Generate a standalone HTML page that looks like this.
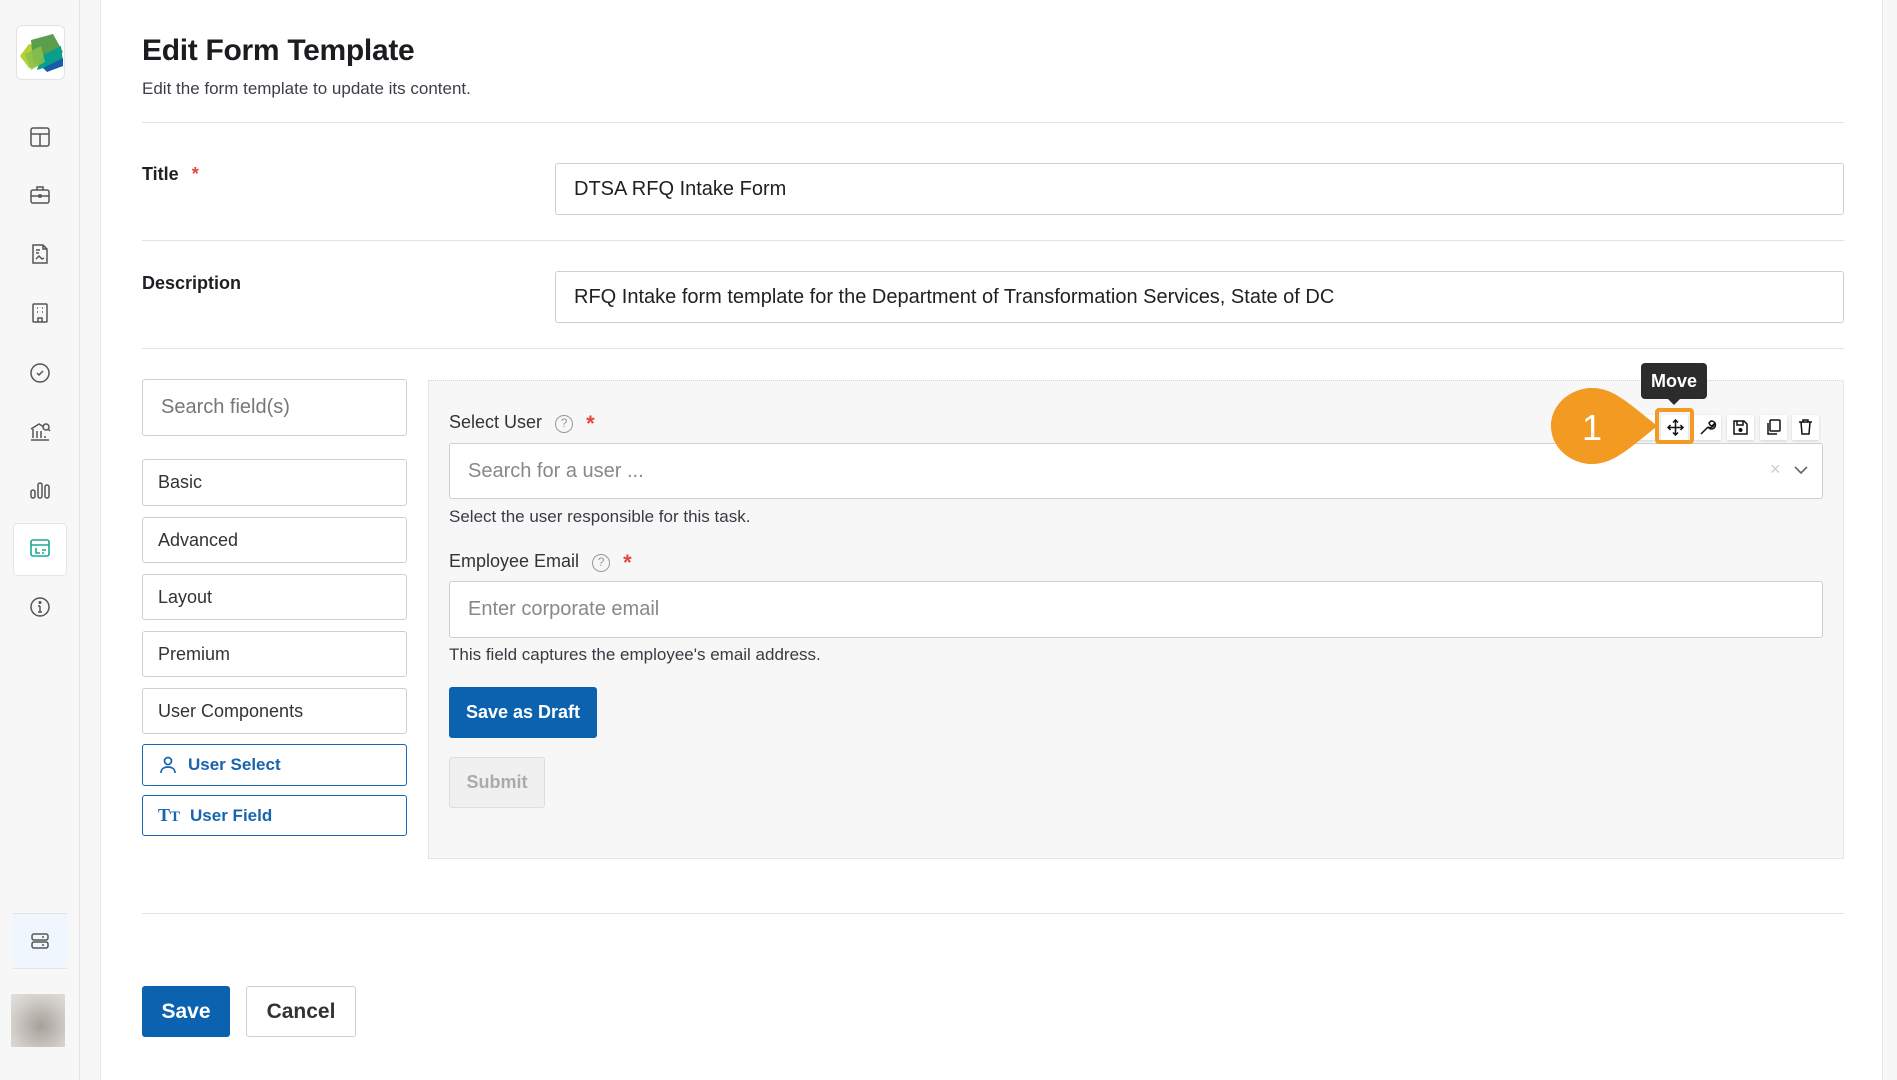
<!DOCTYPE html>
<html><head><meta charset="utf-8"><style>
*{box-sizing:border-box;margin:0;padding:0}
body{width:1897px;height:1080px;position:relative;overflow:hidden;background:#fff;font-family:"Liberation Sans",sans-serif;color:#1f1f24}
.a{position:absolute}
.sb{left:0;top:0;width:80px;height:1080px;background:#f7f7f7;border-right:1px solid #e4e4e4}
.sb2{left:80px;top:0;width:21px;height:1080px;background:#f7f7f7;border-right:1px solid #e8e8e8}
.rs{left:1882px;top:0;width:15px;height:1080px;background:#f7f7f7;border-left:1px solid #e8e8e8}
.ic{left:28px;width:24px;height:24px}
.hr{left:142px;width:1702px;height:1px;background:#e2e2e2}
.lbl{font-size:18px;font-weight:bold;left:142px}
.inp{border:1px solid #cfcfcf;border-radius:3px;background:#fff;font-size:20px;padding-left:18px;display:flex;align-items:center}
.btn{left:142px;width:265px;border:1px solid #cfcfcf;border-radius:3px;background:#fff;font-size:18px;padding-left:15px;display:flex;align-items:center;color:#333}
.btnb{border-color:#1a67b0;color:#1765ae;font-weight:bold;font-size:17px}
.tb{top:415px;width:27px;height:25px;background:#fff;box-shadow:0 1px 3px rgba(0,0,0,.15)}
.q{display:inline-block;width:18px;height:18px;border:1.5px solid #999;border-radius:50%;font-size:12px;text-align:center;line-height:15px;color:#999;margin-left:8px;vertical-align:1px}
.st{color:#e5453a;margin-left:8px;font-weight:bold;font-size:22px;vertical-align:-3px}
</style></head><body>
<div class="a sb"></div><div class="a sb2"></div><div class="a rs"></div>
<div class="a" style="left:16px;top:25px;width:49px;height:55px;border:1px solid #e3e3e3;border-radius:6px;background:#fff;overflow:hidden">
<svg width="49" height="55" viewBox="0 0 49 55"><path d="M3 30 L12 18 L26 22 L20 40 L12 42Z" fill="#b5cf3a"/><path d="M14 14 L36 8 L46 26 L30 44 L16 36Z" fill="#5a9e4e"/><path d="M24 30 L44 20 L46 36 L20 44Z" fill="#0a9f8c"/><path d="M26 42 L46 32 L46 40 L30 46Z" fill="#1a5ca8"/><path d="M8 28 L24 20 L28 36 L14 44Z" fill="#8cc24a" opacity=".85"/></svg></div>
<svg class="a ic" style="top:125px" viewBox="0 0 24 24" fill="none" stroke="#555" stroke-width="1.5"><rect x="3" y="3" width="18" height="18" rx="2"/><path d="M3 9h18M12 9v12"/></svg>
<svg class="a ic" style="top:183px" viewBox="0 0 24 24" fill="none" stroke="#555" stroke-width="1.5"><rect x="3" y="7" width="18" height="13" rx="2"/><path d="M9 7V4h6v3M3 13h18M11 12h2v2h-2z"/></svg>
<svg class="a ic" style="top:242px" viewBox="0 0 24 24" fill="none" stroke="#555" stroke-width="1.5"><path d="M5 3h10l4 4v14H5z M15 3v4h4M8 8h4M8 11h3M8 17l3-3 3 3 2-1"/></svg>
<svg class="a ic" style="top:301px" viewBox="0 0 24 24" fill="none" stroke="#555" stroke-width="1.5"><rect x="5" y="3" width="14" height="18" rx="1"/><path d="M9 7h1M14 7h1M9 11h1M14 11h1M10 21v-4h4v4"/></svg>
<svg class="a ic" style="top:361px" viewBox="0 0 24 24" fill="none" stroke="#555" stroke-width="1.5"><circle cx="12" cy="12" r="9"/><path d="M9 12l2 2 4-4"/></svg>
<svg class="a ic" style="top:419px" viewBox="0 0 24 24" fill="none" stroke="#555" stroke-width="1.5"><path d="M3 10l8-5 5 3M3 21h18M5 10v9M9 12v7M13 12v7M17 17v2"/><circle cx="18" cy="8" r="3"/><path d="M20 10l2 2"/></svg>
<svg class="a ic" style="top:478px" viewBox="0 0 24 24" fill="none" stroke="#555" stroke-width="1.5"><rect x="3" y="12" width="4" height="8" rx="2"/><rect x="10" y="5" width="4" height="15" rx="2"/><rect x="17" y="7" width="4" height="13" rx="2"/></svg>
<div class="a" style="left:13px;top:523px;width:54px;height:53px;background:#fff;border:1px solid #e5e5e5;border-radius:5px"></div>
<svg class="a ic" style="top:536px" viewBox="0 0 24 24" fill="none" stroke="#1aaa92" stroke-width="1.6"><rect x="3" y="4" width="18" height="16" rx="2"/><path d="M3 9h18M8 12v5h4M14 14h4M14 17h2"/></svg>
<svg class="a ic" style="top:595px" viewBox="0 0 24 24" fill="none" stroke="#555" stroke-width="1.5"><circle cx="12" cy="12" r="9"/><path d="M12 11v6M10 17h4M10 11h2"/><circle cx="12" cy="7.5" r=".8" fill="#555"/></svg>
<div class="a" style="left:13px;top:913px;width:54px;height:56px;background:#eff6fd;border-top:1px solid #e3e3e3;border-bottom:1px solid #e3e3e3"></div>
<svg class="a ic" style="top:929px" viewBox="0 0 24 24" fill="none" stroke="#555" stroke-width="1.5"><rect x="4" y="5" width="16" height="6" rx="2"/><rect x="4" y="13" width="16" height="6" rx="2"/><path d="M14 8h2M14 16h2"/></svg>
<div class="a" style="left:11px;top:994px;width:54px;height:53px;background:radial-gradient(circle at 55% 60%,#a8a09a,#d6d3cf 70%,#e3e1de)"></div>

<div class="a" style="left:142px;top:34px;font-size:30px;font-weight:bold;color:#1c1c20;letter-spacing:-0.3px">Edit Form Template</div>
<div class="a" style="left:142px;top:79px;font-size:17px;color:#3e3e48">Edit the form template to update its content.</div>
<div class="a hr" style="top:122px"></div>
<div class="a lbl" style="top:164px">Title <span style="color:#e5453a;margin-left:8px">*</span></div>
<div class="a inp" style="left:555px;top:163px;width:1289px;height:52px">DTSA RFQ Intake Form</div>
<div class="a hr" style="top:240px"></div>
<div class="a lbl" style="top:273px">Description</div>
<div class="a inp" style="left:555px;top:271px;width:1289px;height:52px">RFQ Intake form template for the Department of Transformation Services, State of DC</div>
<div class="a hr" style="top:348px"></div>

<div class="a inp" style="left:142px;top:379px;width:265px;height:57px;color:#777;font-size:20px">Search field(s)</div>
<div class="a btn" style="top:459px;height:47px">Basic</div>
<div class="a btn" style="top:517px;height:46px">Advanced</div>
<div class="a btn" style="top:574px;height:46px">Layout</div>
<div class="a btn" style="top:631px;height:46px">Premium</div>
<div class="a btn" style="top:688px;height:46px">User Components</div>
<div class="a btn btnb" style="top:744px;height:42px"><svg width="20" height="20" viewBox="0 0 20 20" fill="none" stroke="#1765ae" stroke-width="1.7" style="margin-right:10px"><circle cx="10" cy="6" r="3.5"/><path d="M3 18c0-4 3-6 7-6s7 2 7 6"/></svg>User Select</div>
<div class="a btn btnb" style="top:795px;height:41px"><span style="font-family:'Liberation Serif',serif;font-size:18px;margin-right:10px">T<small>T</small></span>User Field</div>

<div class="a" style="left:428px;top:380px;width:1416px;height:479px;background:#f7f7f7;border:1px dotted #d6d6d6"></div>
<div class="a" style="left:449px;top:411px;font-size:18px;color:#333">Select User <span class="q">?</span> <span class="st">*</span></div>
<div class="a inp" style="left:449px;top:443px;width:1374px;height:56px;color:#888">Search for a user ...</div>
<div class="a" style="left:1770px;top:459px;color:#ccc;font-size:18px">×</div>
<svg class="a" style="left:1793px;top:464px" width="16" height="12" viewBox="0 0 16 12" fill="none" stroke="#666" stroke-width="1.6"><path d="M2 3l6 6 6-6"/></svg>
<div class="a" style="left:449px;top:507px;font-size:17px;color:#3a3a44">Select the user responsible for this task.</div>
<div class="a" style="left:449px;top:550px;font-size:18px;color:#333">Employee Email <span class="q">?</span> <span class="st">*</span></div>
<div class="a inp" style="left:449px;top:581px;width:1374px;height:57px;color:#888">Enter corporate email</div>
<div class="a" style="left:449px;top:645px;font-size:17px;color:#3a3a44">This field captures the employee's email address.</div>
<div class="a" style="left:449px;top:687px;width:148px;height:51px;background:#0b63b0;border-radius:3px;color:#fff;font-weight:bold;font-size:18px;display:flex;align-items:center;justify-content:center">Save as Draft</div>
<div class="a" style="left:449px;top:757px;width:96px;height:51px;background:#f0f0f0;border:1px solid #ddd;border-radius:3px;color:#aaa;font-weight:bold;font-size:18px;display:flex;align-items:center;justify-content:center">Submit</div>

<div class="a tb" style="left:1628px"></div>
<div class="a tb" style="left:1661px"></div>
<div class="a tb" style="left:1694px"></div>
<div class="a tb" style="left:1727px"></div>
<div class="a tb" style="left:1760px"></div>
<div class="a tb" style="left:1792px"></div>
<svg class="a" style="left:1667px;top:419px" width="17" height="17" viewBox="0 0 17 17" fill="none" stroke="#111" stroke-width="1.5"><path d="M8.5 1v15M1 8.5h15M6 3.5l2.5-2.5 2.5 2.5M6 13.5l2.5 2.5 2.5-2.5M3.5 6L1 8.5 3.5 11M13.5 6L16 8.5 13.5 11"/></svg>
<svg class="a" style="left:1699px;top:418px" width="18" height="18" viewBox="0 0 18 18" fill="none" stroke="#111" stroke-width="1.5"><path d="M2 16l7-7M9 9a4 4 0 1 0 3-6l-2 2 1 2 2 1 2-2a4 4 0 0 1-6 3"/></svg>
<svg class="a" style="left:1732px;top:419px" width="17" height="17" viewBox="0 0 17 17" fill="none" stroke="#111" stroke-width="1.5"><path d="M2 2h10l3 3v10H2z M5 2v4h6V2"/><circle cx="8.5" cy="11" r="1.3" fill="#111"/></svg>
<svg class="a" style="left:1765px;top:418px" width="17" height="18" viewBox="0 0 17 18" fill="none" stroke="#111" stroke-width="1.5"><rect x="5" y="2" width="10" height="11" rx="1"/><path d="M3 5v11h9"/></svg>
<svg class="a" style="left:1797px;top:418px" width="17" height="18" viewBox="0 0 17 18" fill="none" stroke="#111" stroke-width="1.5"><path d="M2 4h13M6 4V2h5v2M4 4l1 12h7l1-12"/></svg>
<div class="a" style="left:1655px;top:408px;width:39px;height:36px;border:4px solid #f39a22;border-radius:4px"></div>
<div class="a" style="left:1641px;top:363px;width:66px;height:36px;background:#2c2c2c;border-radius:4px;color:#fff;font-weight:bold;font-size:18px;display:flex;align-items:center;justify-content:center">Move</div>
<div class="a" style="left:1667px;top:398px;width:0;height:0;border-left:7px solid transparent;border-right:7px solid transparent;border-top:7px solid #2c2c2c"></div>
<svg class="a" style="left:1545px;top:386px" width="120" height="80" viewBox="0 0 120 80"><path d="M47 2 C68 2 82 16 110 38 L110 42 C82 64 68 78 47 78 C26 78 6 62 6 40 C6 18 26 2 47 2Z" fill="#f39a22"/><text x="47" y="54" font-family="Liberation Sans" font-size="36" fill="#fff" text-anchor="middle">1</text></svg>

<div class="a hr" style="top:913px"></div>
<div class="a" style="left:142px;top:986px;width:88px;height:51px;background:#0b63b0;border-radius:3px;color:#fff;font-weight:bold;font-size:21px;display:flex;align-items:center;justify-content:center">Save</div>
<div class="a" style="left:246px;top:986px;width:110px;height:51px;background:#fff;border:1px solid #cfcfcf;border-radius:3px;color:#333;font-weight:bold;font-size:21px;display:flex;align-items:center;justify-content:center">Cancel</div>
</body></html>
